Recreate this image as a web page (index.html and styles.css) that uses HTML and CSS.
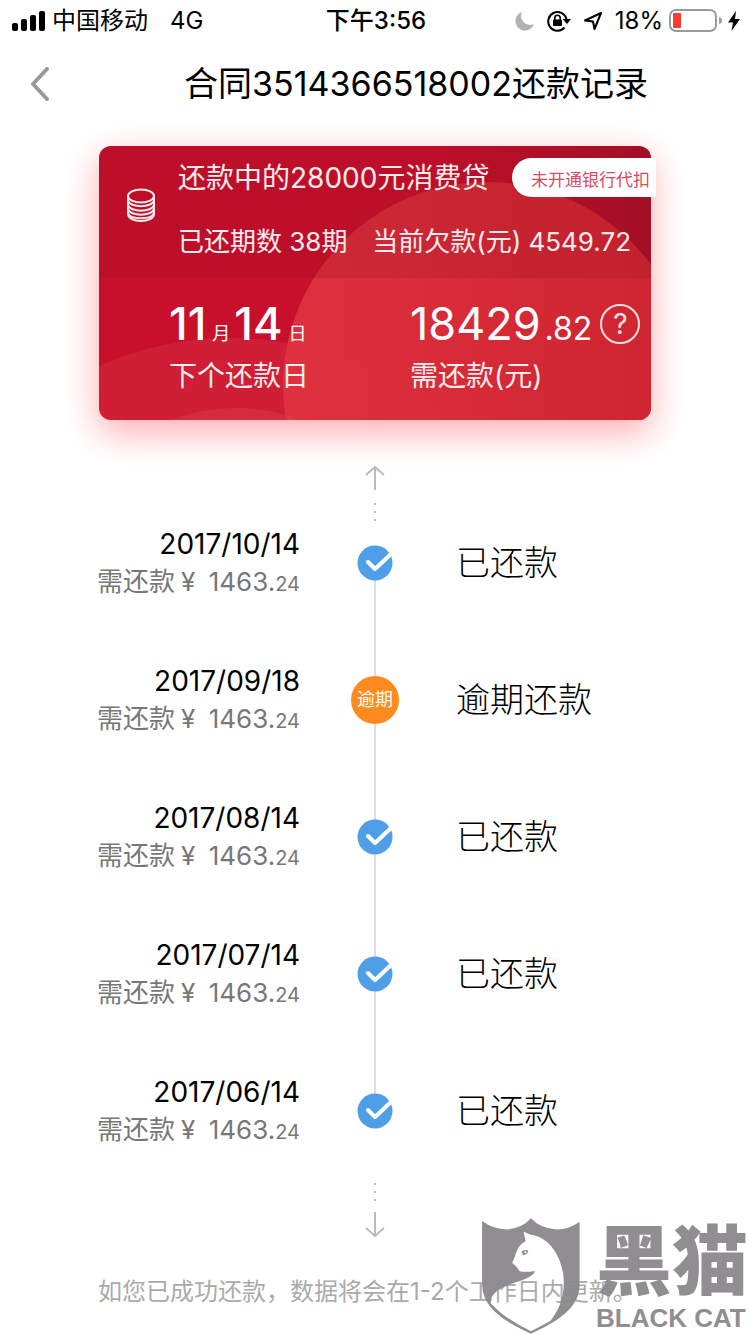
FILE: index.html
```html
<!DOCTYPE html>
<html lang="zh-CN">
<head>
  <meta charset="UTF-8" />
  <meta name="viewport" content="width=device-width, initial-scale=1" />
  <title>还款记录</title>
  <link rel="stylesheet" href="styles.css">
</head>
<body>

  <div class="status-bar">
    <div class="status-left">
      <svg class="signal" width="34" height="20" viewBox="0 0 34 20">
        <rect x="0" y="12" width="6" height="8" rx="2" />
        <rect x="9" y="8" width="6" height="12" rx="2" />
        <rect x="18" y="4" width="6" height="16" rx="2" />
        <rect x="27" y="0" width="6" height="20" rx="2" />
      </svg>
      <span>中国移动</span>
      <span class="network">4G</span>
    </div>
    <div class="status-time">下午3:56</div>
    <div class="status-right">
      <svg width="20" height="20" viewBox="0 0 20 20">
        <path d="M7 1A9.500 9.500 0 1 0 19 13A9 9 0 0 1 7 1Z" fill="#b2b2b2" />
      </svg>
      <svg class="lock" width="24" height="22" viewBox="0 0 24 22">
        <path d="M19.500 9A9.300 9.300 0 1 0 17.500 17.500" fill="none" stroke="#000" stroke-width="2" />
        <path d="M15.500 9H24L20 14Z" />
        <rect x="6" y="9.500" width="9" height="6.500" rx="1" />
        <path d="M7.800 10V8a2.700 2.700 0 0 1 5.400 0V10" fill="none" stroke="#000" stroke-width="1.600" />
      </svg>
      <svg class="arrow" width="20" height="20" viewBox="0 0 20 20">
        <path d="M2 9.500L18 2L11.500 18L10 10.500Z" fill="none" stroke="#000" stroke-width="2" stroke-linejoin="round" />
      </svg>
      <span class="percent">18%</span>
      <svg class="battery" width="53" height="24" viewBox="0 0 53 24">
        <rect x="1" y="1" width="46" height="21" rx="6" fill="none" stroke="#9b9b9b" stroke-width="2" />
        <rect x="4" y="4" width="8" height="15" rx="1" fill="#ff3b30" />
        <path d="M50 8Q53 9 53 11.500T50 15Z" fill="#9b9b9b" />
      </svg>
      <svg width="12" height="20" viewBox="0 0 12 20">
        <path d="M8 0L0 11.500H5L3.500 20L12 8H7Z" />
      </svg>
    </div>
  </div>

  <header>
    <button class="back" type="button" aria-label="返回">
      <svg width="20" height="34" viewBox="0 0 20 34">
        <path d="M17 2L3 17L17 32" fill="none" stroke="#999" stroke-width="4" stroke-linecap="round" stroke-linejoin="round" />
      </svg>
    </button>
    <h1>合同3514366518002还款记录</h1>
  </header>

  <main>
    <section class="card">
      <svg class="card-bg" viewBox="0 0 552 274" preserveAspectRatio="none">
        <defs>
          <linearGradient id="base">
            <stop offset="0" stop-color="#c8102d" />
            <stop offset="0.600" stop-color="#c8102d" />
            <stop offset="1" stop-color="#a81028" />
          </linearGradient>
          <linearGradient id="ball">
            <stop offset="0" stop-color="#e03340" />
            <stop offset="1" stop-color="#d02630" />
          </linearGradient>
        </defs>
        <rect width="552" height="274" fill="url(#base)" />
        <circle cx="131" cy="512" r="320" fill="#e0404a" opacity="0.300" />
        <circle cx="388" cy="240" r="204" fill="url(#ball)" opacity="0.920" />
        <circle cx="137" cy="443" r="181" fill="#e84a52" opacity="0.300" />
        <rect width="552" height="132" fill="#900e20" opacity="0.200" />
      </svg>

      <div class="card-top">
        <svg class="coins" width="30" height="34" viewBox="0 0 30 34">
          <g fill="none" stroke="#ffe9ea" stroke-width="2">
            <ellipse cx="15" cy="8" rx="13" ry="6.500" />
            <path d="M2 8V26C2 30 8 33 15 33S28 30 28 26V8" />
            <path d="M2 12.500C4 20 26 20 28 12.500" />
            <path d="M2 17C4 24.500 26 24.500 28 17" />
            <path d="M2 21C4 28.500 26 28.500 28 21" />
            <path d="M2 25C4 32 26 32 28 25" />
          </g>
        </svg>
        <div class="loan">
          <div class="loan-title">
            <h2>还款中的28000元消费贷</h2>
            <a class="tag" href="#">未开通银行代扣</a>
          </div>
          <div class="loan-info">
            <span>已还期数 38期</span>
            <span>当前欠款(元) 4549.72</span>
          </div>
        </div>
      </div>

      <div class="card-bottom">
        <div class="next-date">
          <div class="value"><b>11</b><small>月</small><b>14</b><small>日</small></div>
          <div class="label">下个还款日</div>
        </div>
        <div class="next-amount">
          <div class="value">18429<span class="cents">.82</span>
            <button class="help" type="button" aria-label="说明">?</button>
          </div>
          <div class="label">需还款(元)</div>
        </div>
      </div>
    </section>

    <section class="timeline">
      <svg class="more" width="20" height="56" viewBox="0 0 20 56">
        <path d="M10 24V1M1 9L10 1L19 9" fill="none" stroke="#bbb" stroke-width="2" />
        <path d="M9 37h2v2h-2zM9 45h2v2h-2zM9 53h2v2h-2z" fill="#bbb" />
      </svg>

      <ul>
        <li>
          <div class="bill">
            <div class="date">2017/10/14</div>
            <div class="amount">需还款<span class="yen">¥</span> 1463.<small>24</small></div>
          </div>
          <div class="mark">
            <svg width="36" height="36" viewBox="0 0 36 36"><circle cx="18" cy="18" r="17.500" fill="#4f9fe8" /><path d="M11 17L18 24L34 9" fill="none" stroke="#fff" stroke-width="4" stroke-linecap="round" stroke-linejoin="round" /></svg>
          </div>
          <div class="state">已还款</div>
        </li>
        <li>
          <div class="bill">
            <div class="date">2017/09/18</div>
            <div class="amount">需还款<span class="yen">¥</span> 1463.<small>24</small></div>
          </div>
          <div class="mark"><span class="late">逾期</span></div>
          <div class="state">逾期还款</div>
        </li>
        <li>
          <div class="bill">
            <div class="date">2017/08/14</div>
            <div class="amount">需还款<span class="yen">¥</span> 1463.<small>24</small></div>
          </div>
          <div class="mark">
            <svg width="36" height="36" viewBox="0 0 36 36"><circle cx="18" cy="18" r="17.500" fill="#4f9fe8" /><path d="M11 17L18 24L34 9" fill="none" stroke="#fff" stroke-width="4" stroke-linecap="round" stroke-linejoin="round" /></svg>
          </div>
          <div class="state">已还款</div>
        </li>
        <li>
          <div class="bill">
            <div class="date">2017/07/14</div>
            <div class="amount">需还款<span class="yen">¥</span> 1463.<small>24</small></div>
          </div>
          <div class="mark">
            <svg width="36" height="36" viewBox="0 0 36 36"><circle cx="18" cy="18" r="17.500" fill="#4f9fe8" /><path d="M11 17L18 24L34 9" fill="none" stroke="#fff" stroke-width="4" stroke-linecap="round" stroke-linejoin="round" /></svg>
          </div>
          <div class="state">已还款</div>
        </li>
        <li>
          <div class="bill">
            <div class="date">2017/06/14</div>
            <div class="amount">需还款<span class="yen">¥</span> 1463.<small>24</small></div>
          </div>
          <div class="mark">
            <svg width="36" height="36" viewBox="0 0 36 36"><circle cx="18" cy="18" r="17.500" fill="#4f9fe8" /><path d="M11 17L18 24L34 9" fill="none" stroke="#fff" stroke-width="4" stroke-linecap="round" stroke-linejoin="round" /></svg>
          </div>
          <div class="state">已还款</div>
        </li>
      </ul>

      <svg class="more" width="20" height="56" viewBox="0 0 20 56">
        <path d="M10 30V54M1 46L10 54L19 46" fill="none" stroke="#bbb" stroke-width="2" />
        <path d="M9 1h2v2h-2zM9 9h2v2h-2zM9 17h2v2h-2z" fill="#bbb" />
      </svg>
    </section>

    <p class="tip">如您已成功还款，数据将会在1-2个工作日内更新。</p>
  </main>

  <div class="watermark">
    <svg width="98" height="116" viewBox="64 56 292 346">
      <path fill="#8b898b" fill-rule="evenodd" d="M64 65Q98 90 138 90Q182 88 210 57Q238 88 286 90Q324 90 355 67V255C354 320 300 360 210 401C120 360 66 320 64 255Z
        M188 97L210 106C262 112 307 170 308 250C307 300 290 335 268 363L210 394Q130 355 90 310C88 260 170 252 203 233C214 227 222 220 221 214Q190 219 175 214Q169 200 154 190Q160 178 166 158Q175 134 194 125Z" />
      <path fill="#8b898b" d="M181 157Q191 147 202 154Q200 166 187 167Z" />
      <circle cx="193" cy="158" r="3" fill="#fff" />
    </svg>
    <div class="watermark-text">
      <strong>黑猫</strong>
      <em>BLACK CAT</em>
    </div>
  </div>

</body>
</html>
```
FILE: styles.css
```css
* {
  box-sizing: border-box;
}
body {
  font-family: Inter, "Noto Sans CJK SC", sans-serif;
  margin: 0;
  min-height: 100vh;
  position: relative;
  background: #fff;
  color: #000;
}
svg {
  display: block;
  flex: none;
}
h1, h2, p, ul {
  margin: 0;
  padding: 0;
}
button {
  font-family: inherit;
  background: none;
  border: none;
  padding: 0;
  cursor: pointer;
}

/* status bar */
.status-bar {
  display: grid;
  grid-template-columns: 1fr auto 1fr;
  align-items: center;
  height: 40px;
  padding: 0 10px 0 12px;
  font-size: 24px;
  line-height: 42px;
}
.status-left, .status-right {
  display: flex;
  align-items: center;
}
.signal {
  margin-right: 6px;
}
.network {
  margin-left: 22px;
}
.status-time {
  font-weight: 500;
}
.status-right {
  justify-content: flex-end;
}
.lock {
  margin-left: 12px;
}
.arrow {
  margin-left: 12px;
}
.percent {
  margin-left: 12px;
}
.battery {
  margin: 0 6px;
}

/* header */
header {
  display: flex;
  height: 88px;
}
.back {
  width: 82px;
  padding-left: 30px;
}
h1 {
  flex: 1;
  font-size: 34px;
  font-weight: 400;
  line-height: 88px;
  text-align: center;
}

/* loan card */
.card {
  position: relative;
  margin: 18px 99px 0;
  border-radius: 12px;
  color: #ffeced;
  box-shadow: 0 12px 36px rgba(255, 40, 50, 0.4);
}
.card-bg {
  position: absolute;
  top: 0;
  left: 0;
  width: 100%;
  height: 100%;
  border-radius: 12px;
}
.card-top, .card-bottom {
  position: relative;
  display: flex;
}
.card-top {
  height: 132px;
}
.coins {
  margin: 42px 22px 0 27px;
}
.loan {
  flex: 1;
}
.loan-title {
  display: flex;
  justify-content: space-between;
  padding-top: 12px;
  margin-right: -5px;
}
h2 {
  font-size: 28px;
  font-weight: 400;
  line-height: 40px;
}
.tag {
  padding: 0 6px 0 19px;
  border-radius: 20px 0 0 20px;
  background: #fff;
  color: #d94a62;
  font-size: 17px;
  line-height: 44px;
  height: 39px;
  text-decoration: none;
}
.loan-info {
  display: flex;
  justify-content: space-between;
  padding: 24px 20px 0 0;
  font-size: 26px;
  line-height: 40px;
}
.card-bottom {
  height: 142px;
  padding: 20px 0 0 70px;
}
.next-date {
  width: 241px;
}
.value {
  display: flex;
  align-items: baseline;
  height: 52px;
  color: #fff;
  font-size: 45px;
  line-height: 52px;
}
.value b {
  font-weight: 500;
}
.value small {
  margin: 0 4px 0 6px;
  font-size: 18px;
}
.cents {
  margin-left: 4px;
  font-size: 32px;
}
.help {
  align-self: center;
  width: 40px;
  height: 40px;
  margin-left: 8px;
  border: 2px solid #ffdfe0;
  border-radius: 50%;
  color: #ffdfe0;
  font-size: 28px;
  line-height: 36px;
}
.label {
  font-size: 28px;
  line-height: 52px;
}

/* timeline */
.timeline {
  padding-top: 46px;
}
.more {
  margin: 0 auto;
}
.timeline ul {
  display: grid;
  gap: 61px;
  padding: 3px 0 33px;
  list-style: none;
}
.timeline li {
  display: grid;
  grid-template-columns: 2fr 1fr 2fr;
  align-items: center;
}
.bill {
  text-align: right;
}
.date {
  height: 38px;
  font-size: 28px;
  line-height: 38px;
}
.amount {
  height: 38px;
  color: #777;
  font-size: 26px;
  line-height: 38px;
}
.yen {
  margin: 0 6px;
}
.amount small {
  font-size: 20px;
}
.mark {
  position: relative;
  display: flex;
  justify-content: center;
}
/* line down to the next mark */
li:not(:last-child) .mark::before {
  content: "";
  position: absolute;
  top: 50%;
  left: 50%;
  width: 2px;
  height: 137px;
  margin-left: -1px;
  background: #ddd;
}
.mark svg, .late {
  position: relative;
  z-index: 1;
}
.late {
  width: 48px;
  height: 48px;
  border-radius: 50%;
  background: #ff8a1e;
  color: #fff;
  font-size: 18px;
  line-height: 48px;
  text-align: center;
}
.state {
  padding-left: 6px;
  font-size: 34px;
  font-weight: 300;
  line-height: 48px;
}
.tip {
  padding: 36px 98px 0;
  color: #aaa;
  font-size: 24px;
  line-height: 36px;
  white-space: nowrap;
}

/* watermark */
.watermark {
  position: absolute;
  right: 2px;
  bottom: 0;
  display: flex;
  gap: 16px;
  opacity: 0.95;
  color: #8b898b;
  pointer-events: none;
}
.watermark-text {
  display: flex;
  flex-direction: column;
}
.watermark-text strong {
  font-size: 76px;
  font-weight: 900;
  line-height: 86px;
}
.watermark-text em {
  font-family: "Liberation Sans", sans-serif;
  font-size: 26px;
  font-style: normal;
  font-weight: 700;
  line-height: 28px;
}
```
